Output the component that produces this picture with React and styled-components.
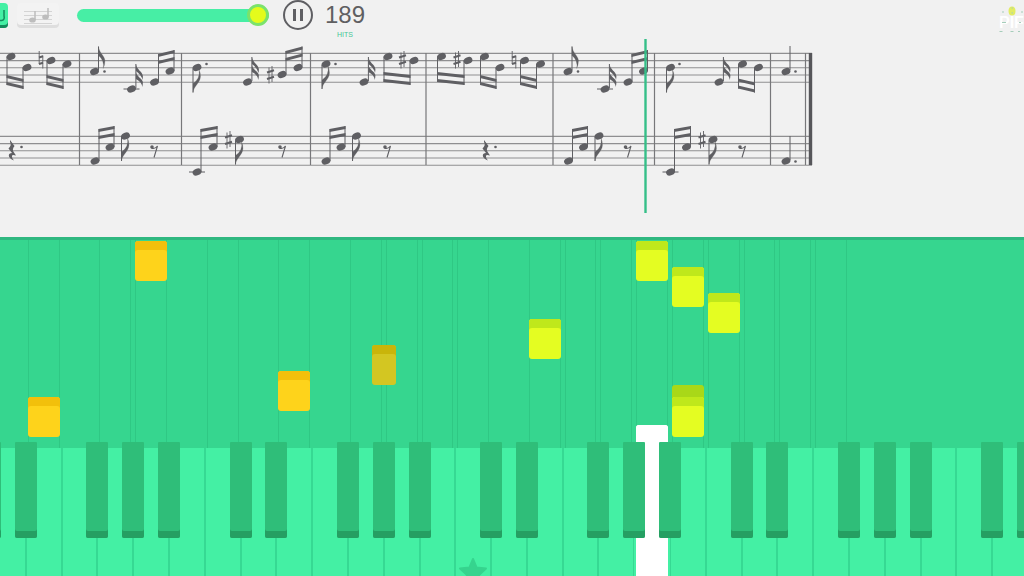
import React, { useState } from "react";
import styled, { createGlobalStyle } from "styled-components";

const GlobalStyle = createGlobalStyle`
  * {
    box-sizing: border-box;
  }
  body {
    margin: 0;
    background: #f1f1f1;
    font-family: "Liberation Sans Narrow", "Liberation Sans", Arial, sans-serif;
  }
  button {
    border: none;
    padding: 0;
    cursor: pointer;
  }
`;

const Page = styled.div`
  display: flex;
  flex-direction: column;
  height: 100vh;
  overflow: hidden;
`;

const Toolbar = styled.header`
  display: flex;
  align-items: flex-start;
  height: 39px;
`;

const ModeButton = styled.button`
  display: flex;
  align-items: center;
  justify-content: center;
  width: 42px;
  height: 25px;
  margin: 3px 9px 0 0;
  border-radius: 4px;
  background: ${(props) => (props.$active ? "#44f0a4" : "#f3f3f3")};
  box-shadow: inset 0 -3px 0 ${(props) => (props.$active ? "#158a5c" : "#dedede")};
`;

const Modes = styled.div`
  display: flex;
  margin-left: -34px;
`;

const Progress = styled.input`
  appearance: none;
  width: 192px;
  height: 22px;
  margin: 4px 14px 0 9px;
  background: transparent;
  &::-webkit-slider-runnable-track {
    height: 13px;
    border-radius: 7px;
    background: #47eea5;
  }
  &::-webkit-slider-thumb {
    appearance: none;
    width: 22px;
    height: 22px;
    margin-top: -5px;
    border: 3px solid #7be36b;
    border-radius: 50%;
    background: #e4fb1c;
  }
`;

const PauseButton = styled.button`
  width: 30px;
  height: 30px;
  background: transparent;
  svg {
    display: block;
  }
`;

const Counter = styled.div`
  display: flex;
  flex-direction: column;
  align-items: center;
  margin-left: 12px;
`;

const Hits = styled.span`
  font-size: 24px;
  line-height: 30px;
  color: #5f5f61;
`;

const HitsLabel = styled.span`
  font-size: 7px;
  line-height: 9px;
  color: #45c795;
`;

const Brand = styled.a`
  margin-left: auto;
  svg {
    display: block;
  }
`;

const Score = styled.section`
  height: 198px;
  svg {
    display: block;
    overflow: visible;
  }
`;

const Roll = styled.section`
  border-top: 3px solid #2fb880;
  background: #36d68f;
`;

const RollGrid = styled.div`
  display: grid;
  grid-template-columns: repeat(29, minmax(0, 1fr));
  grid-template-rows: repeat(8, 26px);
  margin: 0 -4px 0 -10px;
`;

const Lane = styled.div`
  grid-column: ${(props) => props.$col};
  grid-row: 1 / -1;
  margin: 0 2px;
  border: solid #2fc884;
  border-width: 0 1px;
`;

const colors = {
  orange: ["#fed31b", "#f2c00b"],
  amber: ["#d3c622", "#c9b50a"],
  lime: ["#e4fd22", "#bfe81b"],
  white: ["#ffffff", "#ffffff"],
};

const Note = styled.div`
  grid-column: ${(props) => props.$col};
  grid-row: ${(props) => props.$row};
  justify-self: ${(props) => (props.$sharp ? "end" : "stretch")};
  width: ${(props) => (props.$sharp ? "24px" : "auto")};
  height: 40px;
  margin: 1px ${(props) => (props.$sharp ? "-12px" : "2px")} 0 2px;
  border-radius: 3px;
  background: ${(props) => colors[props.$color][0]};
  box-shadow: inset 0 9px 0 ${(props) => colors[props.$color][1]}
    ${(props) => (props.$tail ? ", 0 -12px 0 #a9d818" : "")};
  z-index: 1;
`;

const HeldNote = styled(Note)`
  height: 23px;
  margin-top: 3px;
  border-radius: 3px 3px 0 0;
`;

const Keyboard = styled.section`
  flex: 1;
  display: grid;
  grid-template-columns: repeat(29, minmax(0, 1fr));
  margin: 0 -4px 0 -10px;
  background: #44f0a4;
`;

const KeySlot = styled.div`
  position: relative;
  display: flex;
`;

const WhiteKey = styled.button`
  flex: 1;
  display: flex;
  align-items: flex-end;
  justify-content: center;
  border: solid #36d993;
  border-width: 0 1px;
  background: #44f0a4;
  ${(props) =>
    props.$pressed &&
    `
    margin: 0 2px;
    border: none;
    background: #ffffff;
  `}
  svg {
    flex: none;
    margin-bottom: -11px;
  }
`;

const BlackKey = styled.button`
  position: absolute;
  top: -6px;
  ${(props) => (props.$before ? "left" : "right")}: -11px;
  width: 22px;
  height: 96px;
  border-radius: 1px 1px 2px 2px;
  background: #2fbe79;
  box-shadow: inset 0 -7px 0 #259f62;
  z-index: 2;
`;

const INK = "#5f5f63";

const lanes = [2, 4, 5, 7, 9, 11, 12, 13, 14, 16, 17, 18, 19, 20, 21, 22, 23, 24];

const notes = [
  { col: 5, row: 1, color: "orange" },
  { col: 19, row: 1, color: "lime" },
  { col: 20, row: 2, color: "lime" },
  { col: 21, row: 3, color: "lime" },
  { col: 16, row: 4, color: "lime" },
  { col: 11, row: 5, color: "amber", sharp: true },
  { col: 9, row: 6, color: "orange" },
  { col: 2, row: 7, color: "orange" },
  { col: 20, row: 7, color: "lime", tail: true },
];

const names = ["D", "E", "F", "G", "A", "B", "C"];
const keyName = (n) => names[(n + 6) % 7];
// no black key after E or B
const hasSharp = (n) => keyName(n) !== "E" && keyName(n) !== "B";

const Head = ({ x, y, ledger }) => (
  <g>
    {ledger && <path d={`M${x - 8} ${y}h16`} stroke={INK} strokeWidth="1" />}
    <ellipse
      cx={x}
      cy={y}
      rx="4.6"
      ry="3.3"
      fill={INK}
      transform={`rotate(-24 ${x} ${y})`}
    />
  </g>
);

const Dot = ({ x, y }) => <circle cx={x} cy={y} r="1.3" fill={INK} />;

const Stem = ({ x, from, to }) => (
  <path d={`M${x} ${from}V${to}`} stroke={INK} strokeWidth="1" />
);

// eighth note with the stem up and one flag
const EighthUp = ({ x, y }) => (
  <g>
    <Head x={x} y={y} />
    <Stem x={x + 4} from={y - 1} to={y - 25} />
    <path
      d={`M${x + 4} ${y - 25}c1 7 6 9 6.500 14q0 4-1.800 8q1.500-8-4.700-13z`}
      fill={INK}
      stroke={INK}
      strokeWidth=".2"
    />
  </g>
);

const EighthDown = ({ x, y }) => (
  <g>
    <Head x={x} y={y} />
    <Stem x={x - 4} from={y + 1} to={y + 25} />
    <path
      d={`M${x - 4} ${y + 25}c1-7 7-9 7.500-16q0-4-1.500-7q1.500 9-6 14z`}
      fill={INK}
      stroke={INK}
      strokeWidth=".2"
    />
  </g>
);

const Sixteenth = ({ x, y, ledger }) => (
  <g>
    <Head x={x} y={y} ledger={ledger} />
    <Stem x={x + 4.4} from={y - 1} to={y - 25} />
    <path
      d={`M${x + 4.400} ${y - 25}c1 6 6 7 7 12q0 2-.4 4q-1-5-6.600-9zM${x + 4.400} ${y - 17}c1 5 6 6 7 10q0 3-.8 5q0-5-6.200-8z`}
      fill={INK}
    />
  </g>
);

// two beamed sixteenths; top is the first beam's y at the left stem
const Pair = ({ a, b, top, slope, up, gap = 7, ledger }) => {
  const side = up ? 4 : -4;
  const x1 = a[0] + side;
  const x2 = b[0] + side;
  const far = up ? 0 : gap + 3;
  return (
    <g>
      <Head x={a[0]} y={a[1]} ledger={ledger} />
      <Head x={b[0]} y={b[1]} />
      <Stem x={x1} from={a[1]} to={top + far} />
      <Stem x={x2} from={b[1]} to={top + slope + far} />
      {[0, gap].map((d) => (
        <path
          key={d}
          d={`M${x1 - 0.5} ${top + d}L${x2 + 0.5} ${top + slope + d}v3L${x1 - 0.5} ${top + d + 3}z`}
          fill={INK}
        />
      ))}
    </g>
  );
};

const Sharp = ({ x, y }) => (
  <g stroke={INK} fill="none">
    <path
      d={`M${x - 1.5} ${y - 7.500}v16M${x + 1.5} ${y - 9}v16`}
      strokeWidth=".9"
    />
    <path
      d={`M${x - 3.5} ${y - 2.500}l7-2.200M${x - 3.5} ${y + 4}l7-2.200`}
      strokeWidth="2"
    />
  </g>
);

const Natural = ({ x, y }) => (
  <g stroke={INK} fill="none">
    <path
      d={`M${x - 1.800} ${y - 9}v13M${x + 1.800} ${y - 4.500}v13`}
      strokeWidth=".9"
    />
    <path
      d={`M${x - 2} ${y - 2.500}l4-1.200M${x - 2} ${y + 4}l4-1.200`}
      strokeWidth="2"
    />
  </g>
);

const EighthRest = ({ x, y }) => (
  <g>
    <circle cx={x - 2} cy={y - 3} r="1.800" fill={INK} />
    <path
      d={`M${x - 2.500} ${y - 2}q3 1.500 6-2l-3.500 11.500`}
      stroke={INK}
      strokeWidth="1.100"
      fill="none"
    />
  </g>
);

const QuarterRest = ({ x, y }) => (
  <g>
    <path
      d={`M${x - 2} ${y - 11}l4.500 6q-3 3.500-.5 6.500l2 3q-5-1.500-4 1.500q.3 1.700 2 3.500q-5-2-5.200-5q0-2.500 3.200-2.500l-3.500-4.500q3.500-3.500 1.500-6.500z`}
      fill={INK}
    />
    <Dot x={x + 9.5} y={y - 4} />
  </g>
);

// phrases that come back later in the piece, drawn at an offset
const TrebleCall = ({ x }) => (
  <g>
    <EighthUp x={x + 94.5} y={71.5} />
    <Dot x={x + 104.5} y={71.5} />
    <Sixteenth x={x + 131.5} y={89} ledger />
    <Pair a={[x + 154.5, 82]} b={[x + 170, 71]} top={54} slope={-4} up />
  </g>
);

const BassLow = ({ x, rest }) => (
  <g>
    <Pair a={[x + 95, 161]} b={[x + 110, 147]} top={129} slope={-3} up />
    <EighthDown x={x + 125.5} y={136} />
    <EighthRest x={rest} y={150} />
  </g>
);

const BassLedger = ({ x, rest }) => (
  <g>
    <Pair a={[x + 197, 172]} b={[x + 213, 147]} top={129} slope={-3} up ledger />
    <Sharp x={x + 228.5} y={140} />
    <EighthDown x={x + 239.5} y={139.5} />
    <EighthRest x={rest} y={150} />
  </g>
);

const SheetMusic = () => (
  <svg width="1024" height="198" viewBox="0 39 1024 198" role="img" aria-label="Sheet music">
    {[53, 136].map((top) =>
      [0, 1, 2, 3, 4].map((i) => (
        <path
          key={top + i}
          d={`M0 ${top + 0.4 + i * 7.2}H812`}
          stroke="#8f8f91"
          strokeWidth="1.100"
        />
      ))
    )}
    {[79.5, 181.5, 310.5, 426, 553, 654.5, 770.5, 805.5].map((x) => (
      <path key={x} d={`M${x} 53V165`} stroke="#77777a" strokeWidth="1.200" />
    ))}
    <path d="M810.500 53V165" stroke="#56565a" strokeWidth="3.400" />

    <Pair a={[11, 56.5]} b={[27, 67.5]} top={75} slope={4} />
    <Natural x={41} y={60} />
    <Pair a={[51, 60.5]} b={[67, 64]} top={75} slope={4} />
    <TrebleCall x={0} />
    <EighthDown x={197} y={67.5} />
    <Dot x={206.5} y={64} />
    <Sixteenth x={247.5} y={82} />
    <Sharp x={270.5} y={75} />
    <Pair a={[282, 74.5]} b={[298, 67.5]} top={51} slope={-4.5} up />
    <EighthDown x={326} y={64} />
    <Dot x={335.5} y={64} />
    <Sixteenth x={364} y={82} />
    <Pair a={[388, 56.5]} b={[414, 60.5]} top={72} slope={3} />
    <Sharp x={402.5} y={60} />
    <Pair a={[441.5, 56.5]} b={[468, 60.5]} top={72} slope={3} />
    <Sharp x={457} y={60} />
    <Pair a={[484.5, 56.5]} b={[500, 67.5]} top={75} slope={4} />
    <Natural x={514} y={60} />
    <Pair a={[524.5, 60.5]} b={[540.5, 64]} top={75} slope={4} />
    <TrebleCall x={473.5} />
    <EighthDown x={670.5} y={67.5} />
    <Dot x={679.5} y={64} />
    <Sixteenth x={719} y={82} />
    <Pair a={[742.5, 64]} b={[758.5, 67.5]} top={78.5} slope={4} />
    <Head x={786} y={71.5} />
    <Stem x={790} from={70} to={46} />
    <Dot x={795.5} y={71.5} />

    <QuarterRest x={12} y={151} />
    <BassLow x={0} rest={154} />
    <BassLedger x={0} rest={282} />
    <BassLow x={231} rest={387} />
    <QuarterRest x={486} y={151} />
    <BassLow x={473.5} rest={627.5} />
    <BassLedger x={473.5} rest={742} />
    <Head x={786} y={161} />
    <Stem x={790} from={160} to={136} />
    <Dot x={795.5} y={161.5} />

    <path d="M645.500 39V213" stroke="#35bf88" strokeWidth="2.400" />
  </svg>
);

function App() {
  const [position, setPosition] = useState(100);
  const keys = Array.from({ length: 29 }, (_, i) => i + 1);

  return (
    <Page>
      <GlobalStyle />
      <Toolbar>
        <Modes>
          <ModeButton $active aria-label="Falling notes">
            <svg width="42" height="22" viewBox="0 0 42 22">
              <path
                d="M32 5v7q0 4 3.500 3.500T38 11V5"
                fill="none"
                stroke="#158a5c"
                strokeWidth="1.500"
              />
            </svg>
          </ModeButton>
          <ModeButton aria-label="Sheet music">
            <svg width="32" height="20" viewBox="0 0 32 20">
              <path
                d="M2 5.500h28M2 9.500h28M2 13.500h28M2 17.500h28"
                stroke="#d4d4d4"
                strokeWidth="1.200"
              />
              <path d="M13 14V5M26 11V2" stroke="#bdbdbd" strokeWidth="1.500" />
              <ellipse cx="10.500" cy="14" rx="3.300" ry="2.600" fill="#bdbdbd" />
              <ellipse cx="23.500" cy="11" rx="3.300" ry="2.600" fill="#bdbdbd" />
            </svg>
          </ModeButton>
        </Modes>
        <Progress
          type="range"
          aria-label="Song position"
          value={position}
          onChange={(event) => setPosition(event.target.value)}
        />
        <PauseButton aria-label="Pause">
          <svg width="30" height="30" viewBox="0 0 30 30">
            <circle cx="15" cy="15" r="14" fill="none" stroke={INK} strokeWidth="2" />
            <path d="M11.500 9v12M18.500 9v12" stroke={INK} strokeWidth="3" />
          </svg>
        </PauseButton>
        <Counter>
          <Hits>189</Hits>
          <HitsLabel>HITS</HitsLabel>
        </Counter>
        <Brand href="#" aria-label="Home">
          <svg width="26" height="36" viewBox="0 0 26 36">
            <text
              x="1"
              y="28"
              fontSize="16"
              fontWeight="700"
              fill="#ffffff"
              fontFamily="Liberation Sans Narrow, Liberation Sans, sans-serif"
            >
              PIF
            </text>
            <ellipse cx="14" cy="11" rx="3.500" ry="4.500" fill="#e2ec62" />
            <path
              d="M4 12h2M4 22.500h4M1.500 31.500h3M12.500 31.500h3M20 31.500h2M23 12h2M21 22.500h2M13.500 8h1.500M13.500 13h1.500"
              stroke="#a5cdba"
              strokeWidth="1.200"
            />
          </svg>
        </Brand>
      </Toolbar>
      <Score>
        <SheetMusic />
      </Score>
      <Roll>
        <RollGrid>
          {lanes.map((col) => (
            <Lane key={col} $col={col} />
          ))}
          {notes.map((note) => (
            <Note
              key={`${note.col}-${note.row}`}
              $col={note.col}
              $row={note.row}
              $color={note.color}
              $sharp={note.sharp}
              $tail={note.tail}
            />
          ))}
          <HeldNote $col={19} $row={8} $color="white" />
        </RollGrid>
      </Roll>
      <Keyboard>
        {keys.map((n) => (
          <KeySlot key={n}>
            <WhiteKey $pressed={n === 19} aria-label={keyName(n)}>
              {n === 14 && (
                <svg width="30" height="30" viewBox="0 0 30 30">
                  <path
                    d="M15 2l3.500 8.500 9.500 1-7 6.500 2 9.500-8-5-8 5 2-9.500-7-6.500 9.500-1z"
                    fill="#36d48e"
                    stroke="#36d48e"
                    strokeWidth="2"
                    strokeLinejoin="round"
                  />
                </svg>
              )}
            </WhiteKey>
            {n === 1 && <BlackKey $before aria-label="C sharp" />}
            {hasSharp(n) && <BlackKey aria-label={`${keyName(n)} sharp`} />}
          </KeySlot>
        ))}
      </Keyboard>
    </Page>
  );
}

export default App;
